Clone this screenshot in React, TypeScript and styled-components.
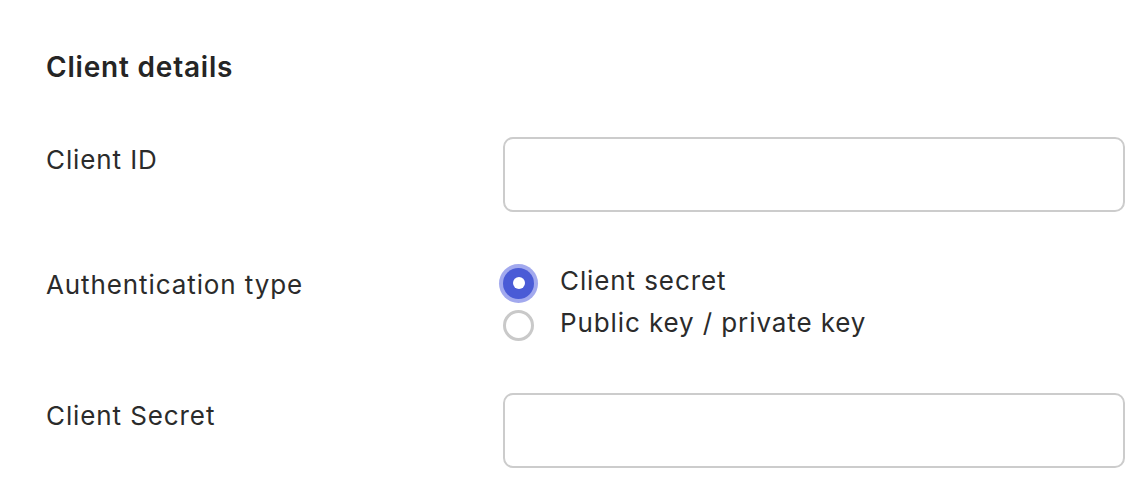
import styled, { createGlobalStyle } from "styled-components";

const GlobalStyle = createGlobalStyle`
  body {
    margin: 0;
    background: #ffffff;
    font-family: Inter, "Noto Sans", "Liberation Sans", sans-serif;
    color: #2b2b2b;
  }
`;

interface RadioOptionProps {
  label: string;
  checked?: boolean;
}

function RadioOption({ label, checked = false }: RadioOptionProps) {
  return (
    <StOption>
      <StRadio $checked={checked}>{checked ? <StDot /> : null}</StRadio>
      <span>{label}</span>
    </StOption>
  );
}

export default function App() {
  return (
    <>
      <GlobalStyle />
      <StSection>
        <StTitle>Client details</StTitle>
        <StForm>
          <StRow>
            <StLabel>Client ID</StLabel>
            <StInput type="text" />
          </StRow>
          <StRow $offset={3}>
            <StLabel>Authentication type</StLabel>
            <StRadioGroup>
              <RadioOption label="Client secret" checked />
              <RadioOption label="Public key / private key" />
            </StRadioGroup>
          </StRow>
          <StRow>
            <StLabel>Client Secret</StLabel>
            <StInput type="text" />
          </StRow>
        </StForm>
      </StSection>
    </>
  );
}

const StSection = styled.section`
  padding: 51px 18px 0 46px;
`;

const StTitle = styled.h2`
  margin: 0;
  font-size: 28px;
  line-height: 32px;
  font-weight: 600;
  letter-spacing: 0.8px;
  color: #252525;
`;

const StForm = styled.div`
  display: flex;
  flex-direction: column;
  gap: 47px;
  margin-top: 54px;
`;

const StRow = styled.div<{ $offset?: number }>`
  display: grid;
  grid-template-columns: 457px 1fr;
  align-items: start;
  padding-top: ${(p) => p.$offset ?? 0}px;
`;

const StLabel = styled.label`
  padding-top: 7px;
  font-size: 26px;
  line-height: 32px;
  letter-spacing: 0.9px;
`;

const StInput = styled.input`
  box-sizing: border-box;
  width: 100%;
  height: 75px;
  margin: 0;
  border: 2px solid #cccccc;
  border-radius: 10px;
  background: #ffffff;
  font: inherit;
  outline: none;
`;

const StRadioGroup = styled.div`
  display: flex;
  flex-direction: column;
`;

const StOption = styled.div`
  display: flex;
  align-items: center;
  gap: 26px;
  height: 42px;
  font-size: 26px;
  line-height: 32px;
  letter-spacing: 0.9px;

  & > span:last-child {
    margin-top: -4px;
  }
`;

const StRadio = styled.span<{ $checked: boolean }>`
  box-sizing: border-box;
  display: flex;
  align-items: center;
  justify-content: center;
  flex: none;
  width: 31px;
  height: 31px;
  border-radius: 50%;
  border: ${(p) => (p.$checked ? "none" : "3px solid #c9c9c9")};
  background: ${(p) => (p.$checked ? "#4a5bd6" : "#ffffff")};
  box-shadow: ${(p) => (p.$checked ? "0 0 0 4px #a2a9ee" : "none")};
`;

const StDot = styled.span`
  width: 12px;
  height: 12px;
  border-radius: 50%;
  background: #ffffff;
`;
